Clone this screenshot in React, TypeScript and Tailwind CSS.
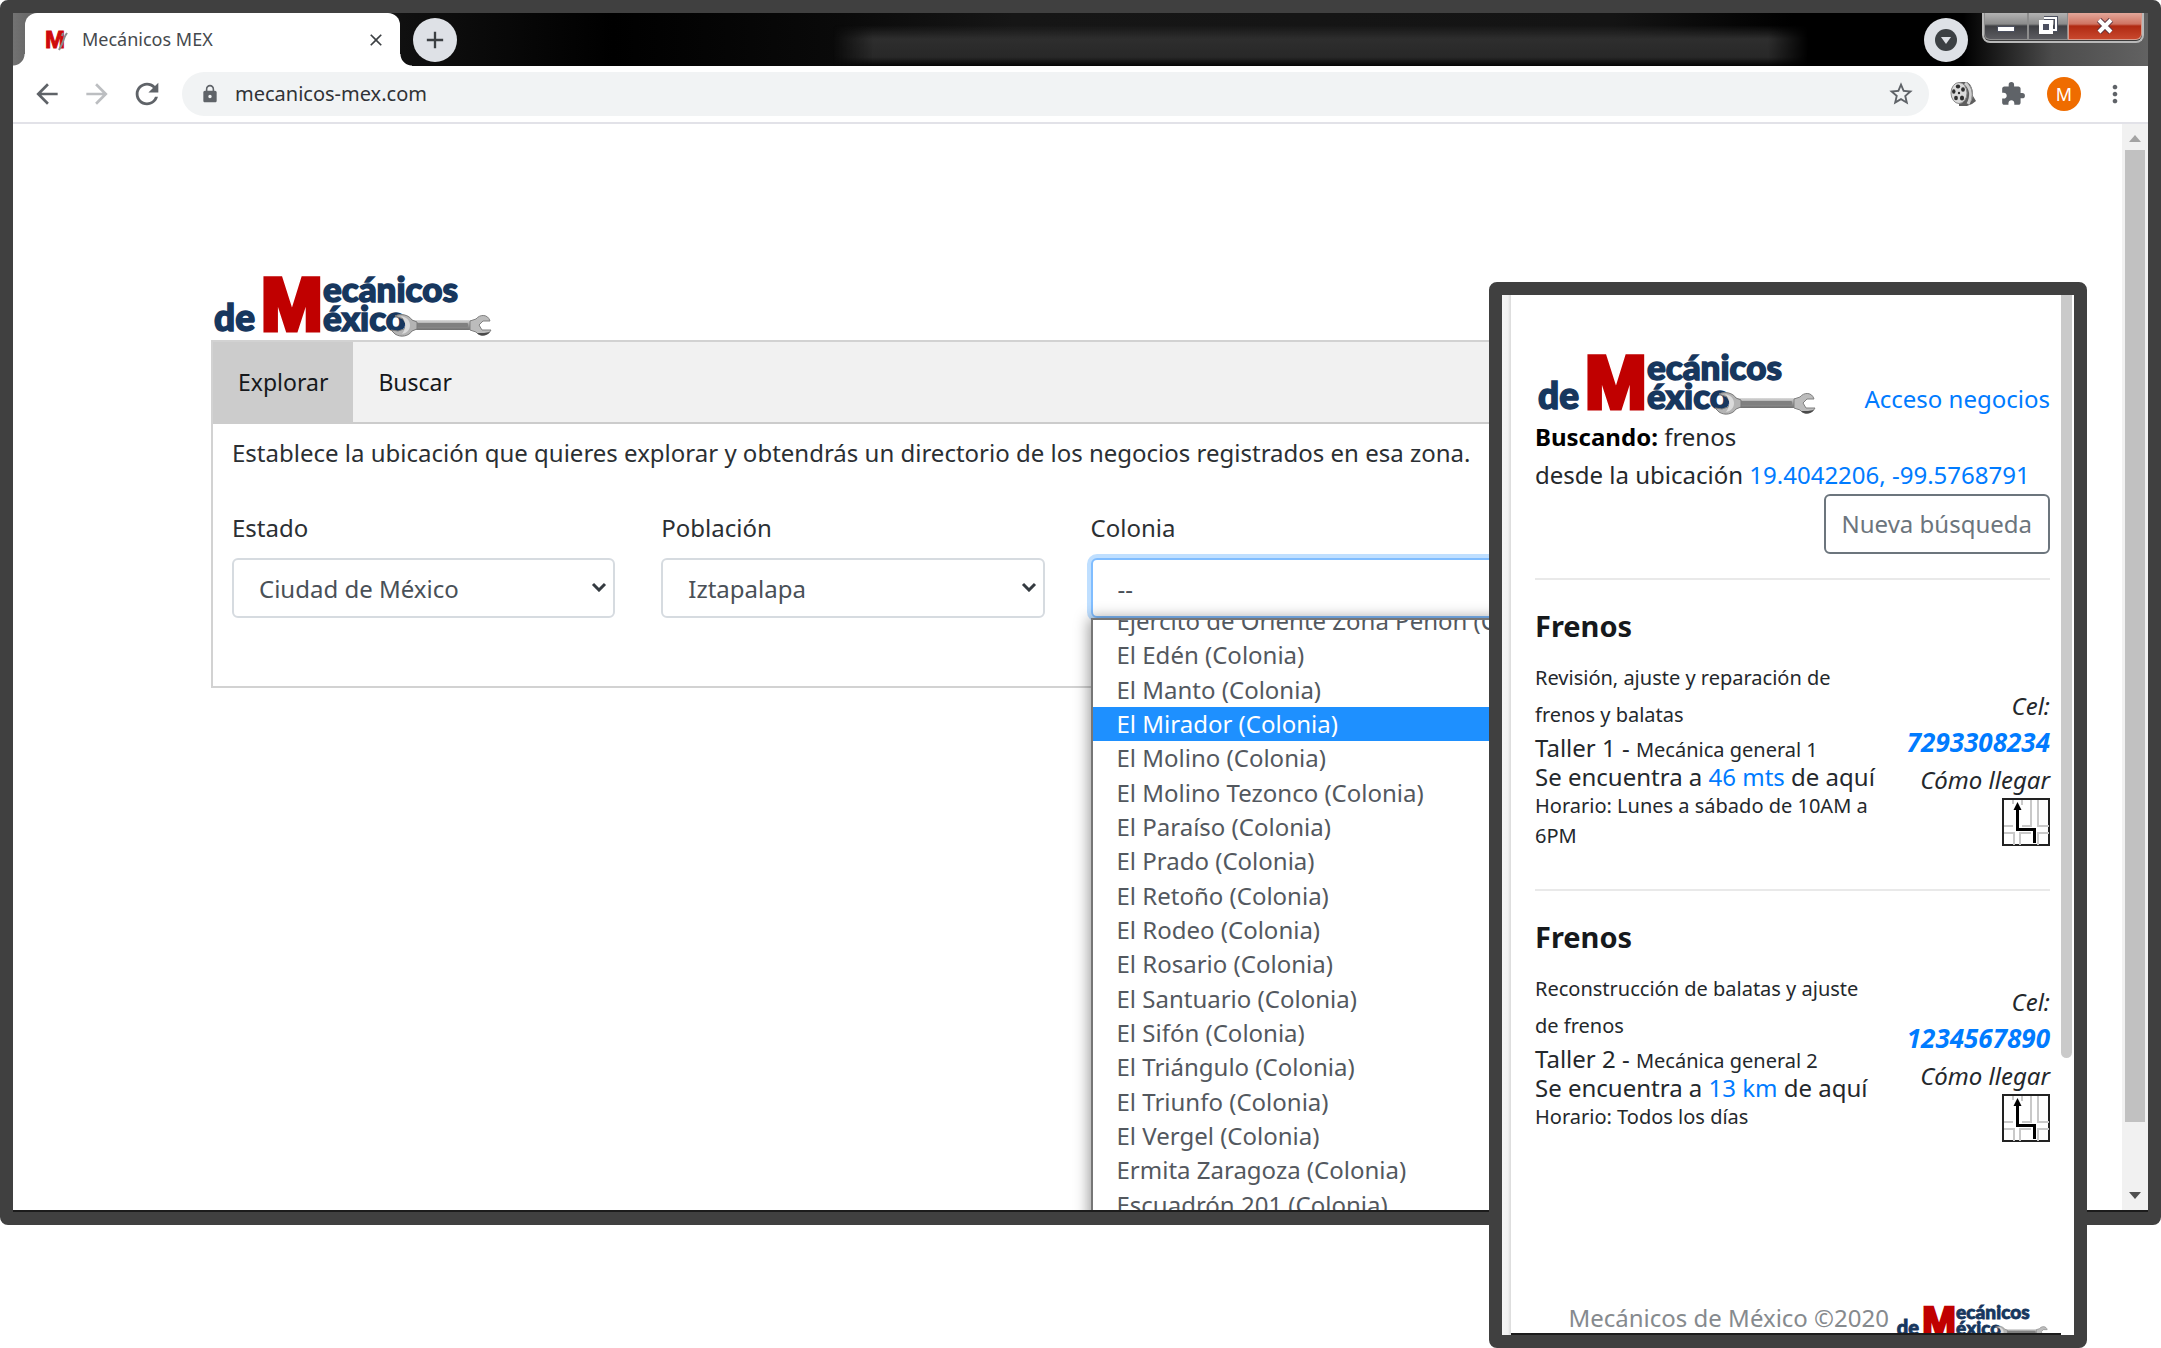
import { useId } from "react";
import {
  MdAdd,
  MdArrowBack,
  MdArrowForward,
  MdClose,
  MdExtension,
  MdLock,
  MdMoreVert,
  MdRefresh,
  MdStarBorder,
} from "react-icons/md";

const colonias = [
  "Ejército de Oriente Zona Peñón (Colonia)",
  "El Edén (Colonia)",
  "El Manto (Colonia)",
  "El Mirador (Colonia)",
  "El Molino (Colonia)",
  "El Molino Tezonco (Colonia)",
  "El Paraíso (Colonia)",
  "El Prado (Colonia)",
  "El Retoño (Colonia)",
  "El Rodeo (Colonia)",
  "El Rosario (Colonia)",
  "El Santuario (Colonia)",
  "El Sifón (Colonia)",
  "El Triángulo (Colonia)",
  "El Triunfo (Colonia)",
  "El Vergel (Colonia)",
  "Ermita Zaragoza (Colonia)",
  "Escuadrón 201 (Colonia)",
];

const results = [
  {
    service: "Frenos",
    description: "Revisión, ajuste y reparación de frenos y balatas",
    shop: "Taller 1",
    kind: "Mecánica general 1",
    distance: "46 mts",
    hours: "Lunes a sábado de 10AM a 6PM",
    phone: "7293308234",
  },
  {
    service: "Frenos",
    description: "Reconstrucción de balatas y ajuste de frenos",
    shop: "Taller 2",
    kind: "Mecánica general 2",
    distance: "13 km",
    hours: "Todos los días",
    phone: "1234567890",
  },
];

function Logo({ className }: { className: string }) {
  const steel = useId();
  return (
    <svg viewBox="0 0 284 66" className={className} role="img" aria-label="Mecánicos de México">
      <defs>
        <linearGradient id={steel} x1="0" y1="0" x2="0" y2="1">
          <stop offset="0" stopColor="#dcdcdc" />
          <stop offset="0.5" stopColor="#9c9c9c" />
          <stop offset="1" stopColor="#707070" />
        </linearGradient>
      </defs>
      <g fontFamily="Lato, sans-serif" fontWeight="900" fill="#17375e" stroke="#17375e" strokeWidth="1.500">
        <text x="3" y="57" fontSize="37">de</text>
        <text x="112" y="28" fontSize="35">ecánicos</text>
        <text x="112" y="57" fontSize="35">éxico</text>
      </g>
      <text
        x="50"
        y="56"
        fontSize="74"
        fontFamily="Liberation Sans, Arial, sans-serif"
        fontWeight="bold"
        fill="#c00000"
        stroke="#c00000"
        strokeWidth="5"
      >
        M
      </text>
      <g>
        <rect x="200" y="46" width="62" height="10" fill={`url(#${steel})`} />
        <rect x="205" y="49" width="52" height="4" rx="1" fill="#808080" />
        <path
          d="M184 42c6-3 14-1 17 4l5 2v7l-5 2c-3 5-11 7-17 3l-4-4 7 1 6-2 2-5-3-5z"
          fill="#b4b4b4"
          stroke="#7a7a7a"
          strokeWidth="1"
        />
        <path d="M190 42c5 1 9 4 9 9s-3 8-8 9c4-5 5-12-1-18z" fill="#dadada" />
        <path
          d="M279 47l-7 0-4 4 3 5 9 0c-3 6-11 7-15 2l-6-2v-9l6-2c4-5 12-5 14 2z"
          fill="#bcbcbc"
          stroke="#808080"
          strokeWidth="1"
        />
        <path d="M266 59c4 4 10 3 13-1l-6 1z" fill="#4a4a4a" />
      </g>
    </svg>
  );
}

function Favicon() {
  return (
    <svg viewBox="0 0 24 24" className="h-6 w-6" aria-hidden="true">
      <text
        x="1"
        y="20"
        fontSize="24"
        fontFamily="Liberation Sans, Arial, sans-serif"
        fontWeight="bold"
        fill="#cf0a0a"
        stroke="#cf0a0a"
        strokeWidth="1"
      >
        M
      </text>
      <path d="M15 22l3-6 3-8M18 8l1-3M21 8l2-3" stroke="#8b8b8b" strokeWidth="2" fill="none" />
    </svg>
  );
}

function FilmReel() {
  return (
    <svg viewBox="0 0 26 26" className="h-[26px] w-[26px]" aria-hidden="true">
      <path d="M9 1h8c5 3 6 8 6 14l3 5-4 3-5 2H9z" fill="#5e5e5e" />
      <path d="M15 2c6 5 7 13 3 21" stroke="#cfcfcf" strokeWidth="3" fill="none" />
      <path d="M20 5c3 5 3 10 1 15" stroke="#9a9a9a" strokeWidth="1" fill="none" />
      <ellipse cx="9" cy="12" rx="8" ry="10.500" fill="#dadada" stroke="#8a8a8a" strokeWidth="1" />
      <g fill="#2e2e2e">
        <ellipse cx="8" cy="5.500" rx="2.200" ry="2" />
        <ellipse cx="3.800" cy="10.500" rx="1.700" ry="2.300" />
        <ellipse cx="13" cy="8.500" rx="1.900" ry="2.300" />
        <ellipse cx="6" cy="17" rx="1.900" ry="2.300" />
        <ellipse cx="12" cy="17" rx="2.100" ry="2.500" />
        <circle cx="9" cy="12" r="1.200" />
      </g>
    </svg>
  );
}

function RouteIcon() {
  return (
    <svg viewBox="0 0 48 48" className="h-12 w-12" aria-hidden="true">
      <rect x="1" y="1" width="46" height="46" fill="#fff" stroke="#222" strokeWidth="2" />
      <g stroke="#c9c9c9" strokeWidth="2" fill="none">
        <path d="M11 2v4M20 2v5M2 28h9M20 28h9V2M36 2v26h11M2 35h10v12M18 47V35h11M36 47V35h11" />
      </g>
      <path d="M15.500 8v23.500h17V45" stroke="#000" strokeWidth="3" fill="none" />
      <path d="M15.500 4l4 8h-8z" fill="#000" />
    </svg>
  );
}

function TabStrip() {
  return (
    <div className="relative flex h-[53px] shrink-0 items-stretch bg-[linear-gradient(90deg,#737373_0,#6a6a6a_12px,#101010_390px,#000_600px,#0a0a0a_830px,#161616_1000px,#141414_1600px,#000_1780px,#000_1950px,#4c4c4c_2040px,#626262_2135px)]">
      <div className="absolute inset-y-0 left-[820px] right-[340px] bg-[linear-gradient(180deg,transparent_12px,#2e2e2e_26px,#282828_44px,#050505_53px)] [mask-image:linear-gradient(90deg,transparent,#000_40px,#000_calc(100%-40px),transparent)]" />
      <div className="relative ml-3 flex w-[375px] items-center rounded-t-xl bg-white pl-[19px] pr-[14px]">
        <div className="absolute bottom-0 -left-3 h-3 w-3 bg-[radial-gradient(circle_at_0_0,transparent_11px,#fff_12px)]" />
        <div className="absolute bottom-0 -right-3 h-3 w-3 bg-[radial-gradient(circle_at_100%_0,transparent_11px,#fff_12px)]" />
        <Favicon />
        <span className="ml-[14px] flex-1 text-[18px] text-[#45494d]">Mecánicos MEX</span>
        <button type="button" aria-label="Cerrar pestaña" className="text-[#3c4043]">
          <MdClose size={20} />
        </button>
      </div>
      <button
        type="button"
        aria-label="Nueva pestaña"
        className="relative ml-[13px] flex h-11 w-11 items-center justify-center self-center rounded-full bg-[#dee1e6] text-[#3c4043]"
      >
        <MdAdd size={28} />
      </button>
      <button
        type="button"
        aria-label="Buscar pestañas"
        className="relative ml-auto mr-[14px] flex h-11 w-11 items-center justify-center self-center rounded-full bg-[#dee1e6]"
      >
        <svg viewBox="0 0 22 22" className="h-[22px] w-[22px]" aria-hidden="true">
          <circle cx="11" cy="11" r="11" fill="#3c4043" />
          <path d="M6 8h10l-5 7z" fill="#dee1e6" />
        </svg>
      </button>
      <div className="relative mr-1 flex h-[30px] w-[162px] rounded-b-lg border-2 border-t-0 border-[#b9b9b9] bg-[#3a3a3a] text-white">
        <button
          type="button"
          aria-label="Minimizar"
          className="flex h-[27px] w-11 items-end justify-center rounded-bl-md border border-t-0 border-[#8d8d8d] bg-[linear-gradient(180deg,#b3b3b3_0,#8b8b8b_11px,#3f4044_13px,#5b5b60_26px)] pb-[7px]"
        >
          <span className="h-[6px] w-[18px] border border-[#4c5060] bg-white" />
        </button>
        <button
          type="button"
          aria-label="Restaurar"
          className="flex h-[27px] w-10 items-center justify-center border border-t-0 border-[#8d8d8d] bg-[linear-gradient(180deg,#b3b3b3_0,#8b8b8b_11px,#3f4044_13px,#5b5b60_26px)]"
        >
          <svg viewBox="0 0 20 20" className="h-5 w-5" aria-hidden="true">
            <path d="M6 2h12v12h-3" stroke="#4c5060" strokeWidth="4" fill="none" />
            <path d="M6 2h12v12h-3" stroke="#fff" strokeWidth="2" fill="none" />
            <rect x="3" y="6" width="10" height="10" fill="#4c5060" stroke="#fff" strokeWidth="4" />
          </svg>
        </button>
        <button
          type="button"
          aria-label="Cerrar"
          className="flex h-[27px] flex-1 items-center justify-center rounded-br-md border border-t-0 border-[#d79a8c] bg-[linear-gradient(180deg,#e3a79a_0,#cf7462_11px,#b02a12_13px,#c8472d_26px)]"
        >
          <svg viewBox="0 0 18 16" className="h-4 w-[18px]" aria-hidden="true">
            <path d="M3 2l12 12M15 2L3 14" stroke="#5a3440" strokeWidth="6" />
            <path d="M3 2l12 12M15 2L3 14" stroke="#fff" strokeWidth="4" />
          </svg>
        </button>
      </div>
    </div>
  );
}

function Toolbar() {
  return (
    <div className="flex h-[58px] shrink-0 items-center border-b-2 border-[#e2e2e8] bg-white pl-5 pr-[19px] text-[#5f6368]">
      <button type="button" aria-label="Atrás" className="flex w-7 justify-center">
        <MdArrowBack size={32} className="shrink-0" />
      </button>
      <button type="button" aria-label="Adelante" className="ml-[22px] flex w-7 justify-center text-[#bcbec1]">
        <MdArrowForward size={32} className="shrink-0" />
      </button>
      <button type="button" aria-label="Recargar" className="ml-[22px] flex w-7 justify-center">
        <MdRefresh size={34} className="shrink-0" />
      </button>
      <div className="ml-[21px] flex h-11 flex-1 items-center rounded-full bg-[#f1f3f4] pl-[18px] pr-[14px]">
        <MdLock size={20} />
        <input
          aria-label="Dirección"
          defaultValue="mecanicos-mex.com"
          className="ml-[15px] min-w-0 flex-1 bg-transparent text-xl text-[#303236] outline-none"
        />
        <button type="button" aria-label="Agregar a favoritos">
          <MdStarBorder size={28} />
        </button>
      </div>
      <button type="button" aria-label="Grabadora" className="ml-[21px]">
        <FilmReel />
      </button>
      <button type="button" aria-label="Extensiones" className="ml-6">
        <MdExtension size={26} />
      </button>
      <button
        type="button"
        aria-label="Cuenta"
        className="ml-[21px] flex h-[34px] w-[34px] items-center justify-center rounded-full bg-[#ef6c00] text-[18px] text-white"
      >
        M
      </button>
      <button type="button" aria-label="Menú" className="ml-5">
        <MdMoreVert size={28} />
      </button>
    </div>
  );
}

function Select({ id, label, value, focused = false }: { id: string; label: string; value: string; focused?: boolean }) {
  return (
    <>
      <label htmlFor={id} className="mb-3 block leading-[37px]">
        {label}
      </label>
      <div className="relative">
        <select
          id={id}
          className={
            focused
              ? "h-[60px] w-full appearance-none rounded-md border-2 border-[#80bdff] bg-white pl-[25px] pt-[2px] text-[#495057] shadow-[0_0_0_4px_#bfdfff] outline-none"
              : "h-[60px] w-full appearance-none rounded-md border-2 border-[#d6dbe0] bg-white pl-[25px] pt-[2px] text-[#495057] outline-none"
          }
        >
          <option>{value}</option>
        </select>
        <svg viewBox="0 0 16 10" className="pointer-events-none absolute right-2 top-6 h-[10px] w-4" aria-hidden="true">
          <path d="M2 2l6 6 6-6" stroke="#343a40" strokeWidth="3" fill="none" />
        </svg>
      </div>
    </>
  );
}

function ColoniaList() {
  return (
    <div className="absolute left-0 top-full w-full overflow-hidden border-2 border-[#767676] bg-white shadow-[0_2px_14px_2px_rgba(0,0,0,0.4)]">
      <ul role="listbox" aria-label="Colonia" className="-mt-4 grid h-[618px] auto-rows-fr text-[#53585e]">
        {colonias.map((name) => (
          <li
            key={name}
            role="option"
            aria-selected={name === "El Mirador (Colonia)"}
            className="flex items-center whitespace-nowrap pl-6 aria-selected:bg-[#1e90ff] aria-selected:text-white"
          >
            {name}
          </li>
        ))}
      </ul>
    </div>
  );
}

function Explorer() {
  return (
    <main className="min-w-0 flex-1 px-[198px] pt-[150px] text-2xl text-[#2b2f33]">
      <Logo className="block h-[66px] w-[284px]" />
      <section className="border-2 border-[#d2d2d2] pb-[68px]">
        <div role="tablist" className="flex h-[82px] border-b-2 border-[#ccc] bg-[#f1f1f1] text-[23px] text-[#16181b]">
          <button type="button" role="tab" aria-selected="true" className="bg-[#ccc] px-[25px]">
            Explorar
          </button>
          <button type="button" role="tab" aria-selected="false" className="px-[25px]">
            Buscar
          </button>
        </div>
        <div className="px-[19px] pt-[10px]">
          <p className="leading-[37px]">
            Establece la ubicación que quieres explorar y obtendrás un directorio de los negocios registrados en esa zona.
          </p>
          <div className="mt-[38px] grid grid-cols-4 gap-x-[46px]">
            <div>
              <Select id="estado" label="Estado" value="Ciudad de México" />
            </div>
            <div>
              <Select id="poblacion" label="Población" value="Iztapalapa" />
            </div>
            <div className="relative col-span-2">
              <Select id="colonia" label="Colonia" value="--" focused />
              <ColoniaList />
            </div>
          </div>
        </div>
      </section>
    </main>
  );
}

function BrowserWindow() {
  return (
    <div className="flex min-h-0 flex-1 flex-col overflow-hidden rounded-lg border-[13px] border-[#404040] bg-white">
      <TabStrip />
      <Toolbar />
      <div className="flex min-h-0 flex-1 overflow-hidden border-b-2 border-[#1c1c1c]">
        <Explorer />
        <div className="flex w-[26px] shrink-0 flex-col items-center bg-[#f1f1f1]">
          <svg viewBox="0 0 12 7" className="mt-[11px] h-[7px] w-3" aria-hidden="true">
            <path d="M0 7l6-7 6 7z" fill="#a3a3a3" />
          </svg>
          <div className="mt-2 w-5 flex-1 bg-[#c1c1c1]" />
          <svg viewBox="0 0 12 7" className="mb-[11px] mt-[70px] h-[7px] w-3" aria-hidden="true">
            <path d="M0 0h12l-6 7z" fill="#505050" />
          </svg>
        </div>
      </div>
    </div>
  );
}

function Result({ item }: { item: (typeof results)[number] }) {
  return (
    <article className="border-t-2 border-[#e9e9e9] pb-[38px] pt-7">
      <h2 className="text-[29px] font-bold leading-9 text-[#16191c]">{item.service}</h2>
      <div className="mt-[15px] flex items-center justify-between">
        <div className="w-[344px] text-2xl">
          <p className="text-xl leading-[37px]">{item.description}</p>
          <p className="leading-[29px]">
            {item.shop} - <span className="text-xl leading-none">{item.kind}</span>
          </p>
          <p className="leading-[29px]">
            Se encuentra a <span className="text-[#007bff]">{item.distance}</span> de aquí
          </p>
          <p className="text-xl leading-[30px]">Horario: {item.hours}</p>
        </div>
        <address className="-my-3 flex flex-col items-end whitespace-nowrap pt-[22px] text-2xl leading-[37px]">
          <span>Cel:</span>
          <a href={`tel:${item.phone}`} className="text-[26px] font-bold leading-[37px] text-[#007bff]">
            {item.phone}
          </a>
          <span>Cómo llegar</span>
          <a href="#ruta" aria-label="Cómo llegar">
            <RouteIcon />
          </a>
        </address>
      </div>
    </article>
  );
}

function Phone() {
  return (
    <div className="absolute bottom-0 right-[74px] top-[282px] flex w-[598px] overflow-hidden rounded-lg border-[13px] border-[#404040] bg-white">
      <div className="w-[9px] shrink-0 bg-[linear-gradient(90deg,#f4f4f4_0,#f0f0f0_6px,#dedede_8px)]" />
      <div className="flex min-w-0 flex-1 flex-col border-b-2 border-[#1c1c1c] pl-6 pr-[11px] text-[#24282c]">
        <header className="pt-[57px] text-2xl leading-[38px]">
          <div className="flex items-end justify-between">
            <Logo className="h-[66px] w-[284px]" />
            <a href="#acceso" className="text-[#007bff]">
              Acceso negocios
            </a>
          </div>
          <p>
            <strong className="font-bold text-black">Buscando:</strong> frenos
          </p>
          <p>
            desde la ubicación{" "}
            <a href="#mapa" className="text-[#007bff]">
              19.4042206, -99.5768791
            </a>
          </p>
          <button
            type="button"
            className="mb-6 ml-auto block h-[60px] rounded-md border-2 border-[#6c757d] px-4 text-[#6c757d]"
          >
            Nueva búsqueda
          </button>
        </header>
        {results.map((item) => (
          <Result key={item.phone} item={item} />
        ))}
        <footer className="mt-auto flex h-11 shrink-0 items-start justify-end gap-[6px] overflow-hidden text-2xl text-[#868a8e]">
          <span className="leading-[58px]">Mecánicos de México ©2020</span>
          <Logo className="mt-[15px] h-9 w-[155px] shrink-0" />
        </footer>
      </div>
      <div className="h-[763px] w-[11px] shrink-0 rounded-b-full bg-[#cacaca]" />
      <div className="w-[2px] shrink-0" />
    </div>
  );
}

export default function App() {
  return (
    <div className="relative flex h-screen flex-col bg-white pb-[123px] font-['Noto_Sans',sans-serif]">
      <BrowserWindow />
      <Phone />
    </div>
  );
}
